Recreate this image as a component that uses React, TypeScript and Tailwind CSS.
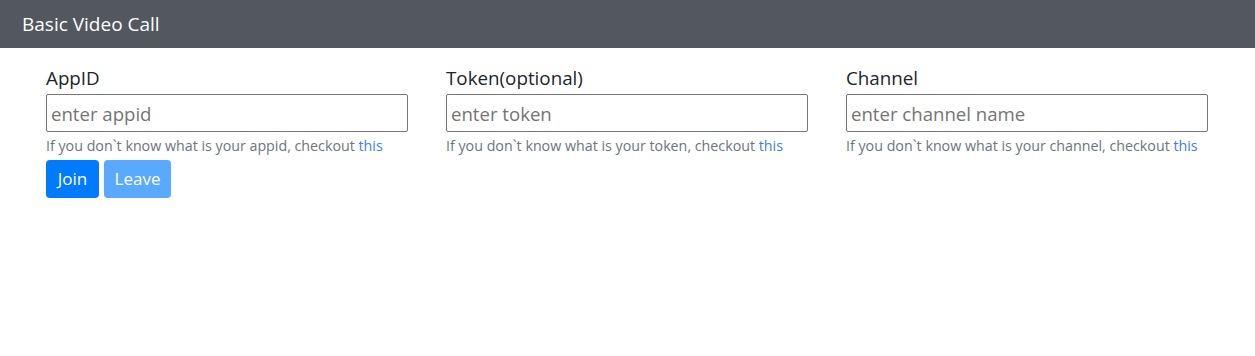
import React from 'react';

const fields = [
  { label: 'AppID', placeholder: 'enter appid', hint: 'appid' },
  { label: 'Token(optional)', placeholder: 'enter token', hint: 'token' },
  { label: 'Channel', placeholder: 'enter channel name', hint: 'channel' },
];

export default function App() {
  return (
    <div className="min-h-[356px] bg-white text-[#212529] font-['Open_Sans',sans-serif]">
      {/* Navbar */}
      <nav className="h-12 bg-[#53575e] flex items-center px-[22px] pt-[1px]">
        <span className="text-white text-[19px]">Basic Video Call</span>
      </nav>

      <form className="pl-[46px] pt-[17px]">
        <div className="flex">
          {fields.map((f) => (
            <div key={f.label} className="w-[400px]">
              <label className="block text-[18.8px] leading-[26px] mb-[3px]">{f.label}</label>
              <input
                type="text"
                placeholder={f.placeholder}
                className="w-[362px] h-[38px] border border-[#767676] rounded-[2px] px-[4px] text-[18.6px] placeholder-[#757575] outline-none"
              />
              <small className="block text-[14.25px] leading-[20px] text-[#6c757d] mt-[4px]">
                If you don`t know what is your {f.hint}, checkout{' '}
                <a href="#" className="text-[#3d7ee8]">this</a>
              </small>
            </div>
          ))}
        </div>
        <div className="flex gap-[5px] mt-[4px]">
          <button type="button" className="h-[38px] w-[53px] rounded-[4px] bg-[#007bff] text-white text-[17px]">
            Join
          </button>
          <button type="button" disabled className="h-[38px] w-[67px] rounded-[4px] bg-[#59a9ff] text-white text-[17px]">
            Leave
          </button>
        </div>
      </form>
    </div>
  );
}
